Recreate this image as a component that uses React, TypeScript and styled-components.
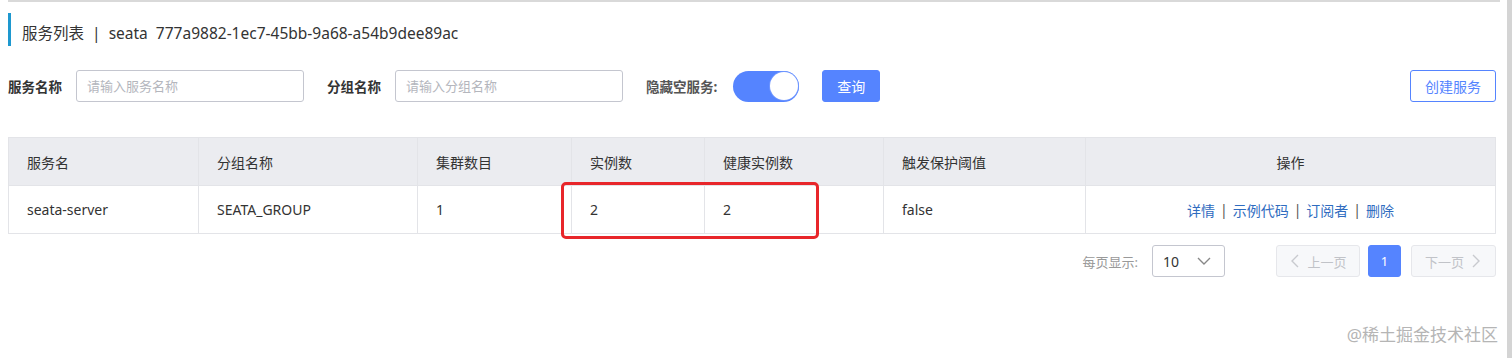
import styled, { createGlobalStyle } from "styled-components";

const GlobalStyle = createGlobalStyle`
  body {
    margin: 0;
    background: #fff;
    font-family: "Noto Sans", "Noto Sans CJK SC", sans-serif;
    color: #333;
  }
`;

const Page = styled.div`
  position: relative;
  display: flex;
  width: 1512px;
  height: 358px;
  overflow: hidden;
`;

const Main = styled.div`
  flex: 1;
  display: flex;
  flex-direction: column;
  padding: 0 11px 0 8px;
`;

/** 스크롤바 */
const ScrollBar = styled.div`
  width: 5px;
  background: #d4d4d4;
`;

const TopLine = styled.div`
  height: 2px;
  background: #d9d9d9;
  margin-right: -4px;
`;

const Title = styled.div`
  margin-top: 11px;
  height: 33px;
  padding-top: 5px;
  box-sizing: border-box;
  display: flex;
  align-items: center;
  border-left: 3px solid #1e98cf;
  padding-left: 11px;
  font-size: 15.5px;
  color: #333;
  white-space: pre;
`;

const FilterRow = styled.div`
  margin-top: 24px;
  display: flex;
  align-items: center;
  height: 32px;
`;

const Label = styled.span<{ $muted?: boolean }>`
  font-size: 13.5px;
  font-weight: 700;
  color: ${(p) => (p.$muted ? "#555" : "#333")};
  margin-right: ${(p) => (p.$muted ? "16px" : "14px")};
`;

const Input = styled.input`
  box-sizing: border-box;
  width: 228px;
  height: 32px;
  border: 1px solid #c4c6cf;
  border-radius: 3px;
  padding: 0 10px;
  font-size: 13px;
  font-family: inherit;
  margin-right: 23px;
  &::placeholder {
    color: #b4b6bd;
  }
`;

const Switch = styled.div`
  box-sizing: border-box;
  width: 66px;
  height: 31px;
  border-radius: 16px;
  background: #5584ff;
  display: flex;
  justify-content: flex-end;
  align-items: center;
  padding: 1px;
  margin-right: 23px;
`;

const Knob = styled.div`
  width: 28px;
  height: 28px;
  border-radius: 50%;
  background: #fff;
  box-shadow: 0 0 0 1px #6f96ff;
`;

const Button = styled.button<{ $ghost?: boolean }>`
  box-sizing: border-box;
  height: 32px;
  padding: 0 14px;
  border-radius: 3px;
  font-size: 14px;
  font-family: inherit;
  border: 1px solid #5584ff;
  background: ${(p) => (p.$ghost ? "#fff" : "#5584ff")};
  color: ${(p) => (p.$ghost ? "#5584ff" : "#fff")};
  margin-left: ${(p) => (p.$ghost ? "auto" : "0")};
`;

const COLS = "189px 219px 154px 133px 179px 202px 1fr";

const Table = styled.div`
  position: relative;
  margin-top: 35px;
  border: 1px solid #e3e4e8;
`;

const Row = styled.div<{ $head?: boolean }>`
  display: grid;
  grid-template-columns: ${COLS};
  height: 47px;
  background: ${(p) => (p.$head ? "#ebecf0" : "#fff")};
  border-bottom: ${(p) => (p.$head ? "1px solid #e3e4e8" : "none")};
`;

const Cell = styled.div<{ $center?: boolean }>`
  display: flex;
  align-items: center;
  justify-content: ${(p) => (p.$center ? "center" : "flex-start")};
  padding-left: ${(p) => (p.$center ? "0" : "18px")};
  font-size: 14px;
  color: #333;
  & + & {
    border-left: 1px solid #e3e4e8;
  }
`;

const Link = styled.a`
  color: #2f6cbf;
  text-decoration: none;
`;

const Sep = styled.span`
  color: #555;
  margin: 0 5px;
`;

/** 강조 표시 */
const Highlight = styled.div`
  position: absolute;
  left: 552px;
  top: 44px;
  width: 258px;
  height: 57px;
  box-sizing: border-box;
  border: 3px solid #e8262a;
  border-radius: 5px;
`;

const Pager = styled.div`
  margin-top: 11px;
  display: flex;
  align-items: center;
  justify-content: flex-end;
  height: 32px;
`;

const PagerLabel = styled.span`
  font-size: 13px;
  color: #999;
  margin-right: 14px;
`;

const Select = styled.div`
  box-sizing: border-box;
  width: 73px;
  height: 32px;
  border: 1px solid #c4c6cf;
  border-radius: 3px;
  display: flex;
  align-items: center;
  justify-content: space-between;
  padding: 0 12px 0 10px;
  font-size: 14px;
  margin-right: 51px;
`;

const PageBtn = styled.div<{ $active?: boolean; $w: number }>`
  box-sizing: border-box;
  width: ${(p) => p.$w}px;
  height: 32px;
  border-radius: 3px;
  display: flex;
  align-items: center;
  justify-content: center;
  gap: 6px;
  font-size: 13px;
  background: ${(p) => (p.$active ? "#5584ff" : "#f7f8fa")};
  border: 1px solid ${(p) => (p.$active ? "#5584ff" : "#e6e7eb")};
  color: ${(p) => (p.$active ? "#fff" : "#c1c3c8")};
`;

const Watermark = styled.div`
  position: absolute;
  right: 14px;
  top: 321px;
  font-size: 17px;
  color: #b5b5b5;
`;

const Chevron = ({ dir }: { dir: "left" | "right" | "down" }) => {
  const d =
    dir === "left" ? "M9 2 L3 8 L9 14" : dir === "right" ? "M3 2 L9 8 L3 14" : "M2 5 L8 11 L14 5";
  const w = dir === "down" ? 16 : 12;
  return (
    <svg width={w} height="16" viewBox={`0 0 ${w} 16`} fill="none">
      <path d={d} stroke={dir === "down" ? "#888" : "#c8cacf"} strokeWidth="1.4" />
    </svg>
  );
};

const headers = ["服务名", "分组名称", "集群数目", "实例数", "健康实例数", "触发保护阈值"];
const values = ["seata-server", "SEATA_GROUP", "1", "2", "2", "false"];

function App() {
  return (
    <Page>
      <GlobalStyle />
      <Main>
        <TopLine />
        <Title>服务列表  |  seata  777a9882-1ec7-45bb-9a68-a54b9dee89ac</Title>
        <FilterRow>
          <Label>服务名称</Label>
          <Input placeholder="请输入服务名称" />
          <Label>分组名称</Label>
          <Input placeholder="请输入分组名称" />
          <Label $muted>隐藏空服务:</Label>
          <Switch>
            <Knob />
          </Switch>
          <Button>查询</Button>
          <Button $ghost>创建服务</Button>
        </FilterRow>
        <Table>
          <Row $head>
            {headers.map((h) => (
              <Cell key={h}>{h}</Cell>
            ))}
            <Cell $center>操作</Cell>
          </Row>
          <Row>
            {values.map((v, i) => (
              <Cell key={i}>{v}</Cell>
            ))}
            <Cell $center>
              <Link>详情</Link>
              <Sep>|</Sep>
              <Link>示例代码</Link>
              <Sep>|</Sep>
              <Link>订阅者</Link>
              <Sep>|</Sep>
              <Link>删除</Link>
            </Cell>
          </Row>
          <Highlight />
        </Table>
        <Pager>
          <PagerLabel>每页显示:</PagerLabel>
          <Select>
            <span>10</span>
            <Chevron dir="down" />
          </Select>
          <PageBtn $w={84}>
            <Chevron dir="left" />
            上一页
          </PageBtn>
          <PageBtn $w={33} $active style={{ margin: "0 10px 0 8px" }}>
            1
          </PageBtn>
          <PageBtn $w={85}>
            下一页
            <Chevron dir="right" />
          </PageBtn>
        </Pager>
      </Main>
      <ScrollBar />
      <Watermark>@稀土掘金技术社区</Watermark>
    </Page>
  );
}

export default App;
